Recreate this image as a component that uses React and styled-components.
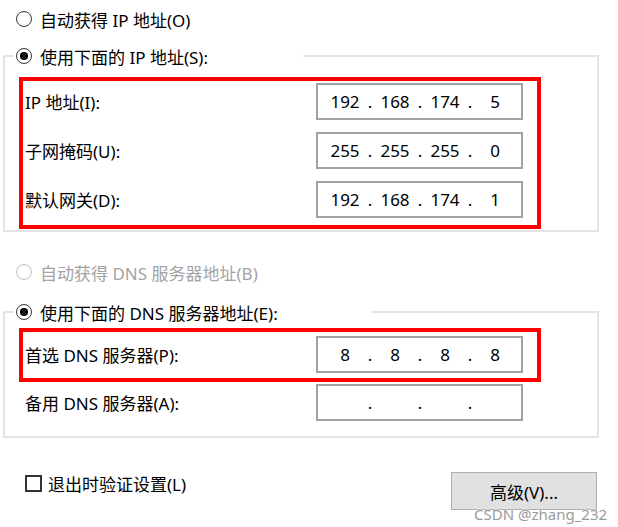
import React from 'react'
import styled, { createGlobalStyle } from 'styled-components'

const App = () => {
    return (
        <Page>
            <GlobalStyle />
            <RadioRow $top={9} $indent={16}>
                <Radio />
                <span>自动获得 IP 地址(O)</span>
            </RadioRow>

            <Group $mt={17} $pb={1}>
                <Legend $width={289}>
                    <RadioRow $indent={2}>
                        <Radio $checked />
                        <span>使用下面的 IP 地址(S):</span>
                    </RadioRow>
                </Legend>
                <Highlight $mt={11} $pt={2} $pb={7}>
                    <Field>
                        <Label>IP 地址(I):</Label>
                        <IpInput parts={['192', '168', '174', '5']} />
                    </Field>
                    <Field>
                        <Label>子网掩码(U):</Label>
                        <IpInput parts={['255', '255', '255', '0']} />
                    </Field>
                    <Field>
                        <Label>默认网关(D):</Label>
                        <IpInput parts={['192', '168', '174', '1']} />
                    </Field>
                </Highlight>
            </Group>

            <RadioRow $top={30} $indent={16} $disabled>
                <Radio $disabled />
                <span>自动获得 DNS 服务器地址(B)</span>
            </RadioRow>

            <Group $mt={20} $pb={15}>
                <Legend $width={357}>
                    <RadioRow $indent={2}>
                        <Radio $checked />
                        <span>使用下面的 DNS 服务器地址(E):</span>
                    </RadioRow>
                </Legend>
                <Highlight $mt={6} $pt={4} $pb={5}>
                    <Field>
                        <Label>首选 DNS 服务器(P):</Label>
                        <IpInput parts={['8', '8', '8', '8']} />
                    </Field>
                </Highlight>
                <PlainRow>
                    <Field>
                        <Label>备用 DNS 服务器(A):</Label>
                        <IpInput parts={['', '', '', '']} />
                    </Field>
                </PlainRow>
            </Group>

            <Footer>
                <CheckRow>
                    <CheckBox />
                    <span>退出时验证设置(L)</span>
                </CheckRow>
                <Button>高级(V)...</Button>
            </Footer>

            <Watermark>CSDN @zhang_232</Watermark>
        </Page>
    )
}

const IpInput = ({ parts }) => (
    <IpBox>
        {parts.map((p, i) => (
            <React.Fragment key={i}>
                <Octet>{p}</Octet>
                {i < 3 && <Dot>.</Dot>}
            </React.Fragment>
        ))}
    </IpBox>
)

export default App

const GlobalStyle = createGlobalStyle`
    body {
        margin: 0;
        background: #fff;
        color: #000;
        font-family: "Noto Sans", "Noto Sans CJK SC", sans-serif;
    }
`

const Page = styled.div`
    position: relative;
    width: 618px;
    height: 527px;
    overflow: hidden;
    background: #fff;
`

const RadioRow = styled.div`
    display: flex;
    align-items: center;
    gap: 8px;
    height: 20px;
    margin-top: ${p => p.$top || 0}px;
    padding-left: ${p => p.$indent || 0}px;
    font-size: 17px;
    color: ${p => p.$disabled ? '#a3a3a3' : '#000'};
    white-space: nowrap;
`

const Radio = styled.span`
    width: 16px;
    height: 16px;
    box-sizing: border-box;
    border-radius: 50%;
    border: 1.5px solid ${p => p.$disabled ? '#c4c4c4' : '#333'};
    display: grid;
    place-items: center;
    flex-shrink: 0;

    &::after {
        content: '';
        display: ${p => p.$checked ? 'block' : 'none'};
        width: 8px;
        height: 8px;
        border-radius: 50%;
        background: #000;
    }
`

const Group = styled.fieldset`
    margin: ${p => p.$mt}px 0 0 3px;
    padding: 0 0 ${p => p.$pb}px 0;
    width: 596px;
    min-width: 0;
    box-sizing: border-box;
    border: 2px solid #e4e4e4;
`

const Legend = styled.legend`
    margin-left: 9px;
    padding: 0;
    width: ${p => p.$width}px;
    box-sizing: border-box;
    background: #fff;
`

const Highlight = styled.div`
    margin: ${p => p.$mt}px 0 0 14px;
    width: 522px;
    box-sizing: border-box;
    border: 4px solid #ff0000;
    padding: ${p => p.$pt}px 0 ${p => p.$pb}px 2px;
    display: grid;
    gap: 12px;
`

const PlainRow = styled.div`
    margin-top: 2px;
    padding-left: 20px;
`

const Field = styled.div`
    display: grid;
    grid-template-columns: 291px 207px;
    align-items: center;
`

const Label = styled.span`
    font-size: 17px;
    white-space: nowrap;
`

const IpBox = styled.div`
    width: 207px;
    height: 37px;
    box-sizing: border-box;
    border: 2px solid #a2a2a2;
    background: #fff;
    display: flex;
    align-items: center;
    padding-left: 7px;
    font-size: 17px;
`

const Octet = styled.span`
    width: 40px;
    text-align: center;
`

const Dot = styled.span`
    width: 10px;
    text-align: center;
`

const Footer = styled.div`
    margin-top: 34px;
    height: 38px;
    display: flex;
    align-items: flex-start;
    justify-content: space-between;
    padding: 0 21px 0 25px;
`

const CheckRow = styled.div`
    display: flex;
    align-items: center;
    gap: 6px;
    height: 22px;
    font-size: 17px;
`

const CheckBox = styled.span`
    width: 17px;
    height: 17px;
    box-sizing: border-box;
    border: 2px solid #333;
    background: #fff;
`

const Button = styled.button`
    width: 146px;
    height: 38px;
    box-sizing: border-box;
    background: #e1e1e1;
    border: 1px solid #adadad;
    font-family: inherit;
    font-size: 17px;
    color: #000;
    padding: 0;
`

const Watermark = styled.div`
    position: absolute;
    left: 474px;
    top: 504px;
    font-size: 15px;
    color: #9a9a9a;
    text-shadow: 0 0 2px #fff, 0 0 2px #fff;
    white-space: nowrap;
`
